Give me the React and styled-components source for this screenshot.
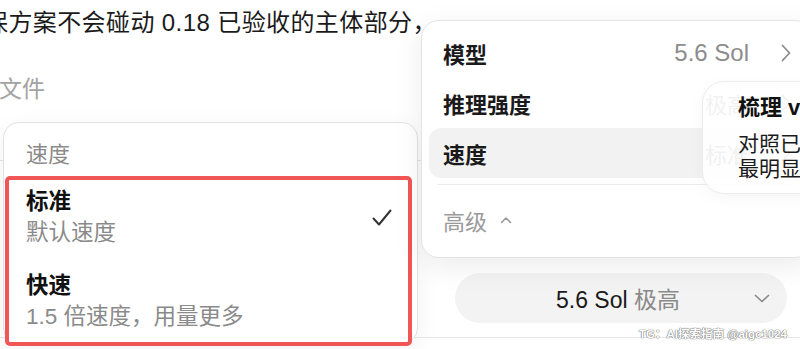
import React from "react";
import styled, { createGlobalStyle } from "styled-components";

const GlobalStyle = createGlobalStyle`
  body {
    margin: 0;
    background: #fff;
    font-family: "Liberation Sans", "Noto Sans CJK SC", sans-serif;
    color: #1a1a1a;
  }
`;

const ChevronRight = () => (
  <svg width="10" height="18" viewBox="0 0 10 18" fill="none">
    <path d="M1.5 1.5 L8.5 9 L1.5 16.5" stroke="#8c8c8c" strokeWidth="1.8" strokeLinecap="round" strokeLinejoin="round" />
  </svg>
);

const ChevronUp = () => (
  <svg width="12" height="8" viewBox="0 0 12 8" fill="none">
    <path d="M1.5 6.5 L6 2 L10.5 6.5" stroke="#9a9a9a" strokeWidth="1.6" strokeLinecap="round" strokeLinejoin="round" />
  </svg>
);

const ChevronDown = () => (
  <svg width="16" height="9" viewBox="0 0 16 9" fill="none">
    <path d="M1.5 1.5 L8 7.5 L14.5 1.5" stroke="#8a8a8a" strokeWidth="1.7" strokeLinecap="round" strokeLinejoin="round" />
  </svg>
);

const Check = () => (
  <svg width="20" height="18" viewBox="0 0 20 18" fill="none">
    <path d="M1.5 9.5 L7 15.5 L18.5 1.5" stroke="#333" strokeWidth="2" strokeLinecap="round" strokeLinejoin="round" />
  </svg>
);

const App = () => {
  return (
    <>
      <GlobalStyle />
      <Page>
        <Message>保方案不会碰动 0.18 已验收的主体部分，</Message>
        <Files>文件</Files>
        <Rule />
        <Composer>
          <ModelPill>
            <span />
            <PillLabel>
              5.6 Sol <Muted>极高</Muted>
            </PillLabel>
            <PillIcon>
              <ChevronDown />
            </PillIcon>
          </ModelPill>
        </Composer>
        <Rule $top={14} />

        {/* speed submenu */}
        <SpeedMenu>
          <MenuHeader>速度</MenuHeader>
          <Highlight>
            <Option>
              <OptionText>
                <OptionTitle>标准</OptionTitle>
                <OptionSub>默认速度</OptionSub>
              </OptionText>
              <Check />
            </Option>
            <Option>
              <OptionText>
                <OptionTitle>快速</OptionTitle>
                <OptionSub>1.5 倍速度，用量更多</OptionSub>
              </OptionText>
            </Option>
          </Highlight>
        </SpeedMenu>

        {/* model settings menu */}
        <SettingsMenu>
          <Row>
            <span>模型</span>
            <RowValue>
              <Value $latin>5.6 Sol</Value>
              <ChevronRight />
            </RowValue>
          </Row>
          <Row>
            <span>推理强度</span>
            <RowValue>
              <Value>极高</Value>
              <ChevronRight />
            </RowValue>
          </Row>
          <Row $active>
            <span>速度</span>
            <RowValue>
              <Value>标准</Value>
              <ChevronRight />
            </RowValue>
          </Row>
          <MenuDivider />
          <Row $muted>
            <Advanced>
              高级 <ChevronUp />
            </Advanced>
          </Row>
        </SettingsMenu>

        <HintCard>
          <HintTitle>梳理 v0.19 计划</HintTitle>
          <HintLine>对照已验收的版本</HintLine>
          <HintLine>最明显的差异</HintLine>
        </HintCard>

        <Watermark>TG：AI探索指南 @aigc1024</Watermark>
      </Page>
    </>
  );
};

const Page = styled.div`
  position: relative;
  width: 800px;
  height: 349px;
  overflow: hidden;
  display: flex;
  flex-direction: column;
`;

const Message = styled.p`
  margin: 8px 0 0 -16px;
  font-size: 24px;
  line-height: 30px;
  letter-spacing: 0.4px;
  white-space: nowrap;
  color: #1a1a1a;
`;

const Files = styled.div`
  margin: 36px 0 0 -1px;
  font-size: 23px;
  line-height: 30px;
  color: #a3a3a3;
`;

const Rule = styled.div`
  margin-top: ${({ $top }) => ($top ?? 56)}px;
  height: 1px;
  background: #e6e6e6;
  flex-shrink: 0;
`;

const Composer = styled.div`
  display: flex;
  justify-content: flex-end;
  padding-right: 13px;
  margin-top: 112px;
`;

const ModelPill = styled.div`
  width: 332px;
  height: 50px;
  border-radius: 25px;
  background: #f3f3f3;
  display: grid;
  grid-template-columns: 1fr auto 1fr;
  align-items: center;
  font-size: 23px;
`;

const PillLabel = styled.span`
  color: #1a1a1a;
  white-space: nowrap;
  margin-left: -6px;
`;

const Muted = styled.span`
  color: #8a8a8a;
`;

const PillIcon = styled.span`
  justify-self: end;
  display: flex;
  padding-right: 17px;
`;

const SpeedMenu = styled.div`
  position: absolute;
  left: 3px;
  top: 122px;
  width: 415px;
  height: 222px;
  box-sizing: border-box;
  padding-top: 17px;
  border: 1px solid #e2e2e2;
  border-radius: 16px;
  background: #fff;
  box-shadow: 0 6px 24px rgba(0, 0, 0, 0.06);
`;

const MenuHeader = styled.div`
  padding-left: 22px;
  font-size: 22px;
  line-height: 30px;
  color: #8a8a8a;
`;

const Highlight = styled.div`
  margin: 6px 5px 0 1px;
  border: 4px solid #f25555;
  border-radius: 5px;
  padding: 7px 16px 9px 17px;
  display: flex;
  flex-direction: column;
  gap: 22px;
  background: #fff;
`;

const Option = styled.div`
  display: flex;
  align-items: center;
  justify-content: space-between;
`;

const OptionText = styled.div`
  display: flex;
  flex-direction: column;
`;

const OptionTitle = styled.span`
  font-size: 22.5px;
  line-height: 30px;
  font-weight: 700;
  color: #111;
`;

const OptionSub = styled.span`
  font-size: 22.5px;
  line-height: 32px;
  color: #8a8a8a;
`;

const SettingsMenu = styled.div`
  position: absolute;
  left: 421px;
  top: 20px;
  width: 392px;
  height: 238px;
  box-sizing: border-box;
  padding: 7px;
  border: 1px solid #e4e4e4;
  border-radius: 18px;
  background: #fff;
  box-shadow: 0 8px 30px rgba(0, 0, 0, 0.08);
`;

const Row = styled.div`
  height: 50px;
  padding: 0 14px;
  border-radius: 12px;
  display: flex;
  align-items: center;
  justify-content: space-between;
  font-size: 22px;
  font-weight: ${({ $muted }) => ($muted ? 400 : 600)};
  color: ${({ $muted }) => ($muted ? "#9a9a9a" : "#1a1a1a")};
  background: ${({ $active }) => ($active ? "#f2f2f2" : "transparent")};
`;

const RowValue = styled.span`
  display: flex;
  align-items: center;
  gap: 32px;
`;

const Value = styled.span`
  font-size: ${({ $latin }) => ($latin ? 24 : 22)}px;
  font-weight: 400;
  color: #8c8c8c;
`;

const MenuDivider = styled.div`
  height: 1px;
  margin: 6px 8px 10px;
  background: #ececec;
`;

const Advanced = styled.span`
  display: flex;
  align-items: center;
  gap: 13px;
`;

const HintCard = styled.div`
  position: absolute;
  left: 702px;
  top: 81px;
  width: 160px;
  height: 113px;
  box-sizing: border-box;
  padding: 12px 0 0 35px;
  border: 1px solid #ececec;
  border-radius: 22px;
  background: rgba(255, 255, 255, 0.88);
  box-shadow: 0 4px 16px rgba(0, 0, 0, 0.04);
  white-space: nowrap;
`;

const HintTitle = styled.div`
  font-size: 22px;
  line-height: 28px;
  font-weight: 700;
  color: #111;
  margin-bottom: 9px;
`;

const HintLine = styled.div`
  font-size: 21px;
  line-height: 25px;
  color: #1a1a1a;
`;

const Watermark = styled.div`
  position: absolute;
  right: 13px;
  bottom: 8px;
  font-size: 11.5px;
  font-weight: 700;
  color: #fff;
  text-shadow: 0 0 1px #777, 0 0 1px #777, 0 0 1px #777;
  white-space: nowrap;
`;

export default App;
